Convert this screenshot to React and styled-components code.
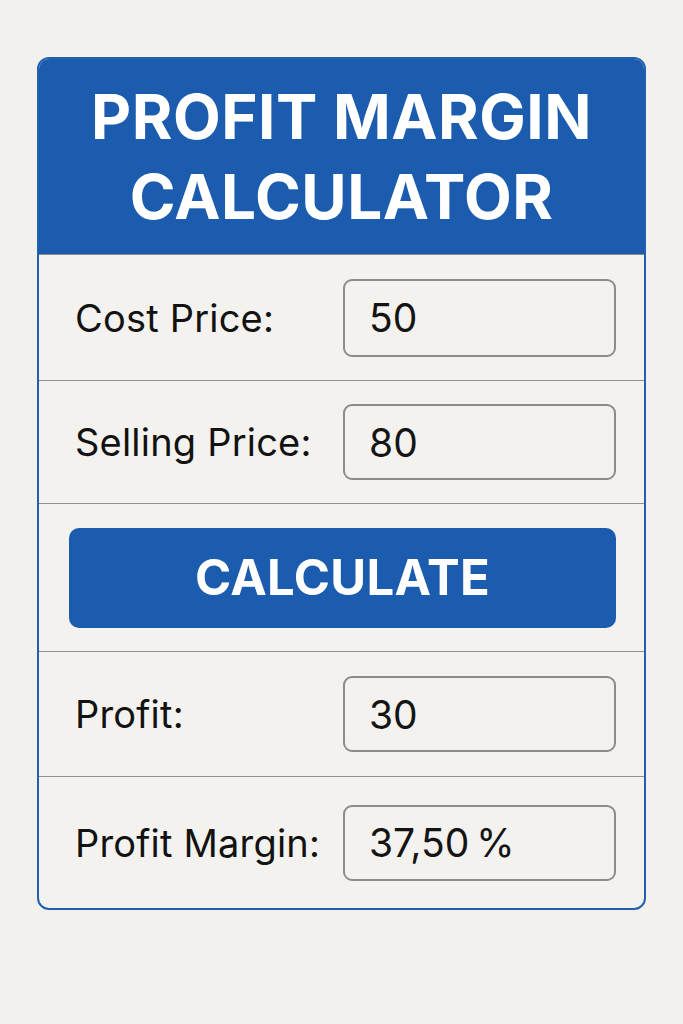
import React from "react";
import styled, { createGlobalStyle } from "styled-components";

const GlobalStyle = createGlobalStyle`
  html, body {
    margin: 0;
    padding: 0;
    background: #f3f1ee;
  }
  body {
    font-family: Inter, "Liberation Sans", sans-serif;
    color: #141414;
  }
`;

const Page = styled.div`
  padding: 57px 37px 0 37px;
`;

const Card = styled.div`
  width: 609px;
  box-sizing: border-box;
  border: 2px solid #2160b0;
  border-radius: 12px;
  overflow: hidden;
  background: #f4f2ef;
`;

const Header = styled.div`
  height: 196px;
  box-sizing: border-box;
  background: #1c5cae;
  display: flex;
  align-items: center;
  justify-content: center;
  border-bottom: 1px solid #8a8a8a;
`;

const Title = styled.h1`
  margin: 0;
  color: #fff;
  font-size: 62px;
  font-weight: 700;
  line-height: 80px;
  text-align: center;
  letter-spacing: 0.5px;
`;

const Row = styled.div`
  height: ${p => p.h}px;
  box-sizing: border-box;
  display: grid;
  grid-template-columns: 1fr 273px;
  align-items: center;
  padding: 0 28px 0 36px;
  border-bottom: ${p => (p.last ? "none" : "1px solid #8f8f8f")};
`;

const Label = styled.span`
  font-size: 38px;
  font-weight: 400;
  letter-spacing: 0.2px;
  color: #121212;
`;

const Field = styled.div`
  height: ${p => p.h}px;
  box-sizing: border-box;
  border: 2px solid #8c8c8c;
  border-radius: 9px;
  display: flex;
  align-items: center;
  padding-left: 24px;
  font-size: 39px;
  color: #141414;
`;

const ButtonRow = styled.div`
  height: 148px;
  box-sizing: border-box;
  display: flex;
  align-items: center;
  padding: 0 28px 0 30px;
  border-bottom: 1px solid #8f8f8f;
`;

const CalcButton = styled.button`
  width: 100%;
  height: 100px;
  border: none;
  border-radius: 10px;
  background: #1c5cae;
  color: #fff;
  font-family: Inter, "Liberation Sans", sans-serif;
  font-size: 49px;
  font-weight: 700;
  letter-spacing: 0.3px;
  cursor: pointer;
`;

const rows = [
  { label: "Cost Price:", value: "50", h: 126, fh: 78 },
  { label: "Selling Price:", value: "80", h: 123, fh: 76 },
];

const results = [
  { label: "Profit:", value: "30", h: 125, fh: 76 },
  { label: "Profit Margin:", value: "37,50\u202F%", h: 131, fh: 76, last: true },
];

export default function App() {
  return (
    <>
      <GlobalStyle />
      <Page>
        <Card>
          <Header>
            <Title>
              PROFIT MARGIN
              <br />
              CALCULATOR
            </Title>
          </Header>
          {rows.map(r => (
            <Row key={r.label} h={r.h}>
              <Label>{r.label}</Label>
              <Field h={r.fh}>{r.value}</Field>
            </Row>
          ))}
          <ButtonRow>
            <CalcButton>CALCULATE</CalcButton>
          </ButtonRow>
          {results.map(r => (
            <Row key={r.label} h={r.h} last={r.last}>
              <Label>{r.label}</Label>
              <Field h={r.fh}>{r.value}</Field>
            </Row>
          ))}
        </Card>
      </Page>
    </>
  );
}
